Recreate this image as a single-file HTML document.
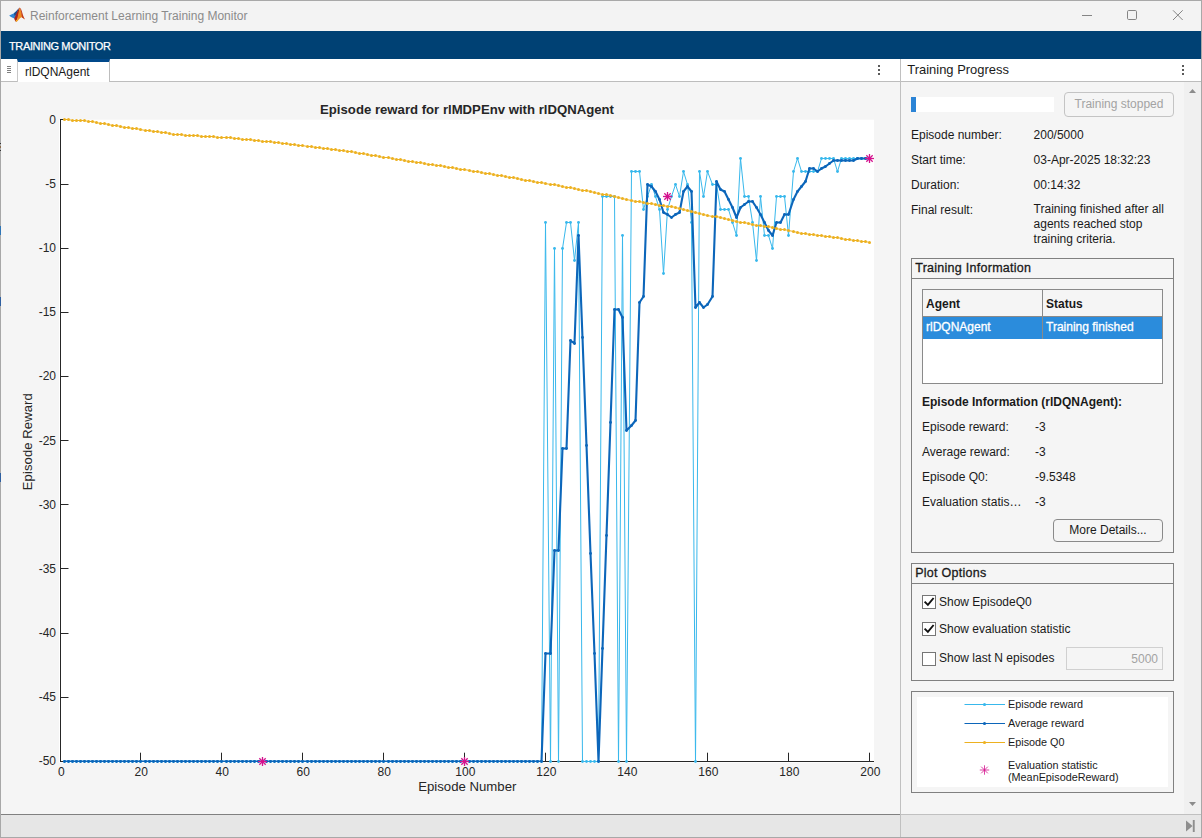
<!DOCTYPE html>
<html><head><meta charset="utf-8"><title>Reinforcement Learning Training Monitor</title>
<style>
*{box-sizing:border-box;margin:0;padding:0}
html,body{width:1202px;height:838px;overflow:hidden}
body{position:relative;background:#f5f5f5;font-family:"Liberation Sans",Arial,sans-serif;font-size:12px;color:#1a1a1a}
.abs{position:absolute}
#titlebar{left:0;top:0;width:1202px;height:31px;background:#f3f3f3}
#title{left:30px;top:9px;font-size:12px;color:#8b8b8b;white-space:nowrap}
#band{left:0;top:31px;width:1202px;height:28px;background:#004174}
#bandtxt{left:9px;top:40px;color:#fff;font-size:11px;letter-spacing:-0.36px;-webkit-text-stroke:0.25px #fff;white-space:nowrap}
#tabbar{left:0;top:59px;width:1202px;height:23px;background:#fff;border-bottom:1px solid #bdbdbd}
#tab{left:17px;top:59px;width:93px;height:23px;background:#fff;border-top:3px solid #00488a;border-right:1px solid #bdbdbd;border-left:1px solid #c8c8c8}
#tabtxt{left:25px;top:65px;font-size:12px;color:#1a1a1a;white-space:nowrap}
#divider{left:900px;top:59px;width:1px;height:779px;background:#c0c0c0}
#status{left:0;top:814px;width:1202px;height:24px;background:#e6e6e6;border-top:1px solid #c0c0c0}
#scroll{left:1184px;top:82px;width:17px;height:732px;background:#f0f0f0}
.lbl{white-space:nowrap;font-size:12px;color:#1a1a1a}
.panel{border:1px solid #808080}
.ptitle{border-bottom:1px solid #808080;font-size:12.5px;padding-left:3.2px;white-space:nowrap;letter-spacing:0.27px;-webkit-text-stroke:0.3px #1a1a1a}
.btn{border:1px solid #c4c4c4;border-radius:4px;text-align:center;white-space:nowrap}
.cb{width:14px;height:14px;border:1px solid #767676;background:#fff}
.win{pointer-events:none}
</style></head>
<body>
<div id="titlebar" class="abs"></div>
<svg class="abs" style="left:0;top:0" width="30" height="30" viewBox="0 0 30 30">
 <path d="M9.2 15.6 L14 13.3 C16 11.8 17.5 10 18.8 8 L16 16 L14.6 18.6 C12.5 18 10.5 16.8 9.2 15.6 Z" fill="#2e86d4"/>
 <path d="M14 13.3 C16 11.8 17.5 10 18.8 8 L16.5 14.5 L14.4 15.8 Z" fill="#1f4e8c"/>
 <path d="M14.2 18.4 C16 15 18 10 19.3 7.8 L19.9 7.8 L18.5 16 L16.3 22 C15.5 21.5 14.7 20 14.2 18.4 Z" fill="#a8231b"/>
 <path d="M16.3 22 C17.5 18 18.7 12 19.6 7.8 C20.6 8.5 21 11 21.6 13 C22.5 16 23.8 18.2 24.9 19.4 C23.5 18.5 22.3 17.4 21.3 17.2 C19.5 18 18 21 16.3 22 Z" fill="#ee8a22"/>
 <path d="M19.9 7.8 C21 8.2 21.6 10.5 22.3 12.8 C23 15.5 24 17.8 24.9 19.4 C23.8 18.6 22.8 17.8 22 17.4 C21.5 14 20.8 10 19.9 7.8 Z" fill="#c03a1e"/>
 <path d="M15.6 20.6 C16.6 20 17.6 19 18.4 18 C17.8 19.6 17.2 21 16.3 22 Z" fill="#f8b71f"/>
</svg>
<div id="title" class="abs">Reinforcement Learning Training Monitor</div>
<svg class="abs" style="left:1070px;top:0" width="132" height="31" viewBox="0 0 132 31" fill="none" stroke="#858585" stroke-width="1">
 <line x1="12" y1="15.5" x2="22" y2="15.5"/>
 <rect x="57.5" y="10.5" width="9" height="9" rx="1.2"/>
 <path d="M103 10.3 L112.7 20 M112.7 10.3 L103 20"/>
</svg>
<div id="band" class="abs"></div>
<div id="bandtxt" class="abs">TRAINING MONITOR</div>
<div id="tabbar" class="abs"></div>
<div id="tab" class="abs"></div>
<div id="tabtxt" class="abs">rlDQNAgent</div>
<svg class="abs" style="left:5px;top:64px" width="8" height="10" viewBox="0 0 8 10" stroke="#808080" stroke-width="1"><path d="M2 2.5H6M2 4.5H6M2 6.5H6M2 8.5H6"/></svg>
<svg class="abs" style="left:876px;top:63px" width="6" height="14" viewBox="0 0 6 14" fill="#5a5a5a"><rect x="2" y="2" width="2" height="2"/><rect x="2" y="6" width="2" height="2"/><rect x="2" y="10" width="2" height="2"/></svg>
<svg class="abs" style="left:1180px;top:63px" width="6" height="14" viewBox="0 0 6 14" fill="#5a5a5a"><rect x="2" y="2" width="2" height="2"/><rect x="2" y="6" width="2" height="2"/><rect x="2" y="10" width="2" height="2"/></svg>
<div class="abs" style="left:907.3px;top:62.3px;font-size:12.95px;white-space:nowrap;color:#1a1a1a">Training Progress</div>
<div id="divider" class="abs"></div>

<svg class="chart" width="900" height="733" viewBox="0 81 900 733" style="position:absolute;left:0;top:81px" font-family="Liberation Sans, Arial, sans-serif">
<rect x="59" y="119.7" width="815" height="643" fill="#fff"/>
<g stroke="#262626" stroke-width="1" fill="none">
<line x1="60.5" y1="119" x2="60.5" y2="762"/>
<line x1="60" y1="761.5" x2="874" y2="761.5"/>
<line x1="60.5" y1="761.5" x2="60.5" y2="752.7"/>
<line x1="140.5" y1="761.5" x2="140.5" y2="752.7"/>
<line x1="221.5" y1="761.5" x2="221.5" y2="752.7"/>
<line x1="302.5" y1="761.5" x2="302.5" y2="752.7"/>
<line x1="383.5" y1="761.5" x2="383.5" y2="752.7"/>
<line x1="464.5" y1="761.5" x2="464.5" y2="752.7"/>
<line x1="545.5" y1="761.5" x2="545.5" y2="752.7"/>
<line x1="626.5" y1="761.5" x2="626.5" y2="752.7"/>
<line x1="707.5" y1="761.5" x2="707.5" y2="752.7"/>
<line x1="788.5" y1="761.5" x2="788.5" y2="752.7"/>
<line x1="869.5" y1="761.5" x2="869.5" y2="752.7"/>
<line x1="60.5" y1="119.5" x2="68.5" y2="119.5"/>
<line x1="60.5" y1="184.5" x2="68.5" y2="184.5"/>
<line x1="60.5" y1="248.5" x2="68.5" y2="248.5"/>
<line x1="60.5" y1="312.5" x2="68.5" y2="312.5"/>
<line x1="60.5" y1="376.5" x2="68.5" y2="376.5"/>
<line x1="60.5" y1="440.5" x2="68.5" y2="440.5"/>
<line x1="60.5" y1="504.5" x2="68.5" y2="504.5"/>
<line x1="60.5" y1="568.5" x2="68.5" y2="568.5"/>
<line x1="60.5" y1="633.5" x2="68.5" y2="633.5"/>
<line x1="60.5" y1="697.5" x2="68.5" y2="697.5"/>
<line x1="60.5" y1="761.5" x2="68.5" y2="761.5"/>
</g>
<clipPath id="cb"><rect x="60" y="119" width="814" height="643"/></clipPath>
<g fill="none" stroke-linejoin="round">
<polyline clip-path="url(#cb)" points="64.50,761.50 68.50,761.50 72.50,761.50 76.50,761.50 80.50,761.50 84.50,761.50 88.50,761.50 92.50,761.50 96.50,761.50 100.50,761.50 104.50,761.50 108.50,761.50 112.50,761.50 116.50,761.50 120.50,761.50 124.50,761.50 128.50,761.50 132.50,761.50 136.50,761.50 140.50,761.50 145.50,761.50 149.50,761.50 153.50,761.50 157.50,761.50 161.50,761.50 165.50,761.50 169.50,761.50 173.50,761.50 177.50,761.50 181.50,761.50 185.50,761.50 189.50,761.50 193.50,761.50 197.50,761.50 201.50,761.50 205.50,761.50 209.50,761.50 213.50,761.50 217.50,761.50 221.50,761.50 226.50,761.50 230.50,761.50 234.50,761.50 238.50,761.50 242.50,761.50 246.50,761.50 250.50,761.50 254.50,761.50 258.50,761.50 262.50,761.50 266.50,761.50 270.50,761.50 274.50,761.50 278.50,761.50 282.50,761.50 286.50,761.50 290.50,761.50 294.50,761.50 298.50,761.50 302.50,761.50 307.50,761.50 311.50,761.50 315.50,761.50 319.50,761.50 323.50,761.50 327.50,761.50 331.50,761.50 335.50,761.50 339.50,761.50 343.50,761.50 347.50,761.50 351.50,761.50 355.50,761.50 359.50,761.50 363.50,761.50 367.50,761.50 371.50,761.50 375.50,761.50 379.50,761.50 383.50,761.50 388.50,761.50 392.50,761.50 396.50,761.50 400.50,761.50 404.50,761.50 408.50,761.50 412.50,761.50 416.50,761.50 420.50,761.50 424.50,761.50 428.50,761.50 432.50,761.50 436.50,761.50 440.50,761.50 444.50,761.50 448.50,761.50 452.50,761.50 456.50,761.50 460.50,761.50 464.50,761.50 469.50,761.50 473.50,761.50 477.50,761.50 481.50,761.50 485.50,761.50 489.50,761.50 493.50,761.50 497.50,761.50 501.50,761.50 505.50,761.50 509.50,761.50 513.50,761.50 517.50,761.50 521.50,761.50 525.50,761.50 529.50,761.50 533.50,761.50 537.50,761.50 541.50,761.50 545.50,222.50 550.50,761.50 554.50,248.50 558.50,761.50 562.50,248.50 566.50,222.50 570.50,222.50 574.50,260.50 578.50,222.50 582.50,761.50 586.50,761.50 590.50,761.50 594.50,761.50 598.50,761.50 602.50,196.50 606.50,196.50 610.50,196.50 614.50,196.50 618.50,761.50 622.50,235.50 626.50,761.50 631.50,171.50 635.50,171.50 639.50,171.50 643.50,209.50 647.50,196.50 651.50,184.50 655.50,196.50 659.50,209.50 663.50,273.50 667.50,209.50 671.50,196.50 675.50,184.50 679.50,196.50 683.50,171.50 687.50,184.50 691.50,222.50 695.50,761.50 699.50,171.50 703.50,196.50 707.50,171.50 712.50,184.50 716.50,184.50 720.50,209.50 724.50,209.50 728.50,209.50 732.50,222.50 736.50,235.50 740.50,158.50 744.50,196.50 748.50,196.50 752.50,222.50 756.50,260.50 760.50,196.50 764.50,235.50 768.50,235.50 772.50,248.50 776.50,196.50 780.50,196.50 784.50,196.50 788.50,235.50 793.50,171.50 797.50,158.50 801.50,171.50 805.50,171.50 809.50,171.50 813.50,171.50 817.50,171.50 821.50,158.50 825.50,158.50 829.50,158.50 833.50,158.50 837.50,171.50 841.50,158.50 845.50,158.50 849.50,158.50 853.50,158.50 857.50,158.50 861.50,158.50 865.50,158.50 869.50,158.50" stroke="#38B8EC" stroke-width="1"/>
<circle cx="64.50" cy="761.50" r="1.45" fill="#38B8EC"/><circle cx="68.50" cy="761.50" r="1.45" fill="#38B8EC"/><circle cx="72.50" cy="761.50" r="1.45" fill="#38B8EC"/><circle cx="76.50" cy="761.50" r="1.45" fill="#38B8EC"/><circle cx="80.50" cy="761.50" r="1.45" fill="#38B8EC"/><circle cx="84.50" cy="761.50" r="1.45" fill="#38B8EC"/><circle cx="88.50" cy="761.50" r="1.45" fill="#38B8EC"/><circle cx="92.50" cy="761.50" r="1.45" fill="#38B8EC"/><circle cx="96.50" cy="761.50" r="1.45" fill="#38B8EC"/><circle cx="100.50" cy="761.50" r="1.45" fill="#38B8EC"/><circle cx="104.50" cy="761.50" r="1.45" fill="#38B8EC"/><circle cx="108.50" cy="761.50" r="1.45" fill="#38B8EC"/><circle cx="112.50" cy="761.50" r="1.45" fill="#38B8EC"/><circle cx="116.50" cy="761.50" r="1.45" fill="#38B8EC"/><circle cx="120.50" cy="761.50" r="1.45" fill="#38B8EC"/><circle cx="124.50" cy="761.50" r="1.45" fill="#38B8EC"/><circle cx="128.50" cy="761.50" r="1.45" fill="#38B8EC"/><circle cx="132.50" cy="761.50" r="1.45" fill="#38B8EC"/><circle cx="136.50" cy="761.50" r="1.45" fill="#38B8EC"/><circle cx="140.50" cy="761.50" r="1.45" fill="#38B8EC"/><circle cx="145.50" cy="761.50" r="1.45" fill="#38B8EC"/><circle cx="149.50" cy="761.50" r="1.45" fill="#38B8EC"/><circle cx="153.50" cy="761.50" r="1.45" fill="#38B8EC"/><circle cx="157.50" cy="761.50" r="1.45" fill="#38B8EC"/><circle cx="161.50" cy="761.50" r="1.45" fill="#38B8EC"/><circle cx="165.50" cy="761.50" r="1.45" fill="#38B8EC"/><circle cx="169.50" cy="761.50" r="1.45" fill="#38B8EC"/><circle cx="173.50" cy="761.50" r="1.45" fill="#38B8EC"/><circle cx="177.50" cy="761.50" r="1.45" fill="#38B8EC"/><circle cx="181.50" cy="761.50" r="1.45" fill="#38B8EC"/><circle cx="185.50" cy="761.50" r="1.45" fill="#38B8EC"/><circle cx="189.50" cy="761.50" r="1.45" fill="#38B8EC"/><circle cx="193.50" cy="761.50" r="1.45" fill="#38B8EC"/><circle cx="197.50" cy="761.50" r="1.45" fill="#38B8EC"/><circle cx="201.50" cy="761.50" r="1.45" fill="#38B8EC"/><circle cx="205.50" cy="761.50" r="1.45" fill="#38B8EC"/><circle cx="209.50" cy="761.50" r="1.45" fill="#38B8EC"/><circle cx="213.50" cy="761.50" r="1.45" fill="#38B8EC"/><circle cx="217.50" cy="761.50" r="1.45" fill="#38B8EC"/><circle cx="221.50" cy="761.50" r="1.45" fill="#38B8EC"/><circle cx="226.50" cy="761.50" r="1.45" fill="#38B8EC"/><circle cx="230.50" cy="761.50" r="1.45" fill="#38B8EC"/><circle cx="234.50" cy="761.50" r="1.45" fill="#38B8EC"/><circle cx="238.50" cy="761.50" r="1.45" fill="#38B8EC"/><circle cx="242.50" cy="761.50" r="1.45" fill="#38B8EC"/><circle cx="246.50" cy="761.50" r="1.45" fill="#38B8EC"/><circle cx="250.50" cy="761.50" r="1.45" fill="#38B8EC"/><circle cx="254.50" cy="761.50" r="1.45" fill="#38B8EC"/><circle cx="258.50" cy="761.50" r="1.45" fill="#38B8EC"/><circle cx="262.50" cy="761.50" r="1.45" fill="#38B8EC"/><circle cx="266.50" cy="761.50" r="1.45" fill="#38B8EC"/><circle cx="270.50" cy="761.50" r="1.45" fill="#38B8EC"/><circle cx="274.50" cy="761.50" r="1.45" fill="#38B8EC"/><circle cx="278.50" cy="761.50" r="1.45" fill="#38B8EC"/><circle cx="282.50" cy="761.50" r="1.45" fill="#38B8EC"/><circle cx="286.50" cy="761.50" r="1.45" fill="#38B8EC"/><circle cx="290.50" cy="761.50" r="1.45" fill="#38B8EC"/><circle cx="294.50" cy="761.50" r="1.45" fill="#38B8EC"/><circle cx="298.50" cy="761.50" r="1.45" fill="#38B8EC"/><circle cx="302.50" cy="761.50" r="1.45" fill="#38B8EC"/><circle cx="307.50" cy="761.50" r="1.45" fill="#38B8EC"/><circle cx="311.50" cy="761.50" r="1.45" fill="#38B8EC"/><circle cx="315.50" cy="761.50" r="1.45" fill="#38B8EC"/><circle cx="319.50" cy="761.50" r="1.45" fill="#38B8EC"/><circle cx="323.50" cy="761.50" r="1.45" fill="#38B8EC"/><circle cx="327.50" cy="761.50" r="1.45" fill="#38B8EC"/><circle cx="331.50" cy="761.50" r="1.45" fill="#38B8EC"/><circle cx="335.50" cy="761.50" r="1.45" fill="#38B8EC"/><circle cx="339.50" cy="761.50" r="1.45" fill="#38B8EC"/><circle cx="343.50" cy="761.50" r="1.45" fill="#38B8EC"/><circle cx="347.50" cy="761.50" r="1.45" fill="#38B8EC"/><circle cx="351.50" cy="761.50" r="1.45" fill="#38B8EC"/><circle cx="355.50" cy="761.50" r="1.45" fill="#38B8EC"/><circle cx="359.50" cy="761.50" r="1.45" fill="#38B8EC"/><circle cx="363.50" cy="761.50" r="1.45" fill="#38B8EC"/><circle cx="367.50" cy="761.50" r="1.45" fill="#38B8EC"/><circle cx="371.50" cy="761.50" r="1.45" fill="#38B8EC"/><circle cx="375.50" cy="761.50" r="1.45" fill="#38B8EC"/><circle cx="379.50" cy="761.50" r="1.45" fill="#38B8EC"/><circle cx="383.50" cy="761.50" r="1.45" fill="#38B8EC"/><circle cx="388.50" cy="761.50" r="1.45" fill="#38B8EC"/><circle cx="392.50" cy="761.50" r="1.45" fill="#38B8EC"/><circle cx="396.50" cy="761.50" r="1.45" fill="#38B8EC"/><circle cx="400.50" cy="761.50" r="1.45" fill="#38B8EC"/><circle cx="404.50" cy="761.50" r="1.45" fill="#38B8EC"/><circle cx="408.50" cy="761.50" r="1.45" fill="#38B8EC"/><circle cx="412.50" cy="761.50" r="1.45" fill="#38B8EC"/><circle cx="416.50" cy="761.50" r="1.45" fill="#38B8EC"/><circle cx="420.50" cy="761.50" r="1.45" fill="#38B8EC"/><circle cx="424.50" cy="761.50" r="1.45" fill="#38B8EC"/><circle cx="428.50" cy="761.50" r="1.45" fill="#38B8EC"/><circle cx="432.50" cy="761.50" r="1.45" fill="#38B8EC"/><circle cx="436.50" cy="761.50" r="1.45" fill="#38B8EC"/><circle cx="440.50" cy="761.50" r="1.45" fill="#38B8EC"/><circle cx="444.50" cy="761.50" r="1.45" fill="#38B8EC"/><circle cx="448.50" cy="761.50" r="1.45" fill="#38B8EC"/><circle cx="452.50" cy="761.50" r="1.45" fill="#38B8EC"/><circle cx="456.50" cy="761.50" r="1.45" fill="#38B8EC"/><circle cx="460.50" cy="761.50" r="1.45" fill="#38B8EC"/><circle cx="464.50" cy="761.50" r="1.45" fill="#38B8EC"/><circle cx="469.50" cy="761.50" r="1.45" fill="#38B8EC"/><circle cx="473.50" cy="761.50" r="1.45" fill="#38B8EC"/><circle cx="477.50" cy="761.50" r="1.45" fill="#38B8EC"/><circle cx="481.50" cy="761.50" r="1.45" fill="#38B8EC"/><circle cx="485.50" cy="761.50" r="1.45" fill="#38B8EC"/><circle cx="489.50" cy="761.50" r="1.45" fill="#38B8EC"/><circle cx="493.50" cy="761.50" r="1.45" fill="#38B8EC"/><circle cx="497.50" cy="761.50" r="1.45" fill="#38B8EC"/><circle cx="501.50" cy="761.50" r="1.45" fill="#38B8EC"/><circle cx="505.50" cy="761.50" r="1.45" fill="#38B8EC"/><circle cx="509.50" cy="761.50" r="1.45" fill="#38B8EC"/><circle cx="513.50" cy="761.50" r="1.45" fill="#38B8EC"/><circle cx="517.50" cy="761.50" r="1.45" fill="#38B8EC"/><circle cx="521.50" cy="761.50" r="1.45" fill="#38B8EC"/><circle cx="525.50" cy="761.50" r="1.45" fill="#38B8EC"/><circle cx="529.50" cy="761.50" r="1.45" fill="#38B8EC"/><circle cx="533.50" cy="761.50" r="1.45" fill="#38B8EC"/><circle cx="537.50" cy="761.50" r="1.45" fill="#38B8EC"/><circle cx="541.50" cy="761.50" r="1.45" fill="#38B8EC"/><circle cx="545.50" cy="222.50" r="1.45" fill="#38B8EC"/><circle cx="550.50" cy="761.50" r="1.45" fill="#38B8EC"/><circle cx="554.50" cy="248.50" r="1.45" fill="#38B8EC"/><circle cx="558.50" cy="761.50" r="1.45" fill="#38B8EC"/><circle cx="562.50" cy="248.50" r="1.45" fill="#38B8EC"/><circle cx="566.50" cy="222.50" r="1.45" fill="#38B8EC"/><circle cx="570.50" cy="222.50" r="1.45" fill="#38B8EC"/><circle cx="574.50" cy="260.50" r="1.45" fill="#38B8EC"/><circle cx="578.50" cy="222.50" r="1.45" fill="#38B8EC"/><circle cx="582.50" cy="761.50" r="1.45" fill="#38B8EC"/><circle cx="586.50" cy="761.50" r="1.45" fill="#38B8EC"/><circle cx="590.50" cy="761.50" r="1.45" fill="#38B8EC"/><circle cx="594.50" cy="761.50" r="1.45" fill="#38B8EC"/><circle cx="598.50" cy="761.50" r="1.45" fill="#38B8EC"/><circle cx="602.50" cy="196.50" r="1.45" fill="#38B8EC"/><circle cx="606.50" cy="196.50" r="1.45" fill="#38B8EC"/><circle cx="610.50" cy="196.50" r="1.45" fill="#38B8EC"/><circle cx="614.50" cy="196.50" r="1.45" fill="#38B8EC"/><circle cx="618.50" cy="761.50" r="1.45" fill="#38B8EC"/><circle cx="622.50" cy="235.50" r="1.45" fill="#38B8EC"/><circle cx="626.50" cy="761.50" r="1.45" fill="#38B8EC"/><circle cx="631.50" cy="171.50" r="1.45" fill="#38B8EC"/><circle cx="635.50" cy="171.50" r="1.45" fill="#38B8EC"/><circle cx="639.50" cy="171.50" r="1.45" fill="#38B8EC"/><circle cx="643.50" cy="209.50" r="1.45" fill="#38B8EC"/><circle cx="647.50" cy="196.50" r="1.45" fill="#38B8EC"/><circle cx="651.50" cy="184.50" r="1.45" fill="#38B8EC"/><circle cx="655.50" cy="196.50" r="1.45" fill="#38B8EC"/><circle cx="659.50" cy="209.50" r="1.45" fill="#38B8EC"/><circle cx="663.50" cy="273.50" r="1.45" fill="#38B8EC"/><circle cx="667.50" cy="209.50" r="1.45" fill="#38B8EC"/><circle cx="671.50" cy="196.50" r="1.45" fill="#38B8EC"/><circle cx="675.50" cy="184.50" r="1.45" fill="#38B8EC"/><circle cx="679.50" cy="196.50" r="1.45" fill="#38B8EC"/><circle cx="683.50" cy="171.50" r="1.45" fill="#38B8EC"/><circle cx="687.50" cy="184.50" r="1.45" fill="#38B8EC"/><circle cx="691.50" cy="222.50" r="1.45" fill="#38B8EC"/><circle cx="695.50" cy="761.50" r="1.45" fill="#38B8EC"/><circle cx="699.50" cy="171.50" r="1.45" fill="#38B8EC"/><circle cx="703.50" cy="196.50" r="1.45" fill="#38B8EC"/><circle cx="707.50" cy="171.50" r="1.45" fill="#38B8EC"/><circle cx="712.50" cy="184.50" r="1.45" fill="#38B8EC"/><circle cx="716.50" cy="184.50" r="1.45" fill="#38B8EC"/><circle cx="720.50" cy="209.50" r="1.45" fill="#38B8EC"/><circle cx="724.50" cy="209.50" r="1.45" fill="#38B8EC"/><circle cx="728.50" cy="209.50" r="1.45" fill="#38B8EC"/><circle cx="732.50" cy="222.50" r="1.45" fill="#38B8EC"/><circle cx="736.50" cy="235.50" r="1.45" fill="#38B8EC"/><circle cx="740.50" cy="158.50" r="1.45" fill="#38B8EC"/><circle cx="744.50" cy="196.50" r="1.45" fill="#38B8EC"/><circle cx="748.50" cy="196.50" r="1.45" fill="#38B8EC"/><circle cx="752.50" cy="222.50" r="1.45" fill="#38B8EC"/><circle cx="756.50" cy="260.50" r="1.45" fill="#38B8EC"/><circle cx="760.50" cy="196.50" r="1.45" fill="#38B8EC"/><circle cx="764.50" cy="235.50" r="1.45" fill="#38B8EC"/><circle cx="768.50" cy="235.50" r="1.45" fill="#38B8EC"/><circle cx="772.50" cy="248.50" r="1.45" fill="#38B8EC"/><circle cx="776.50" cy="196.50" r="1.45" fill="#38B8EC"/><circle cx="780.50" cy="196.50" r="1.45" fill="#38B8EC"/><circle cx="784.50" cy="196.50" r="1.45" fill="#38B8EC"/><circle cx="788.50" cy="235.50" r="1.45" fill="#38B8EC"/><circle cx="793.50" cy="171.50" r="1.45" fill="#38B8EC"/><circle cx="797.50" cy="158.50" r="1.45" fill="#38B8EC"/><circle cx="801.50" cy="171.50" r="1.45" fill="#38B8EC"/><circle cx="805.50" cy="171.50" r="1.45" fill="#38B8EC"/><circle cx="809.50" cy="171.50" r="1.45" fill="#38B8EC"/><circle cx="813.50" cy="171.50" r="1.45" fill="#38B8EC"/><circle cx="817.50" cy="171.50" r="1.45" fill="#38B8EC"/><circle cx="821.50" cy="158.50" r="1.45" fill="#38B8EC"/><circle cx="825.50" cy="158.50" r="1.45" fill="#38B8EC"/><circle cx="829.50" cy="158.50" r="1.45" fill="#38B8EC"/><circle cx="833.50" cy="158.50" r="1.45" fill="#38B8EC"/><circle cx="837.50" cy="171.50" r="1.45" fill="#38B8EC"/><circle cx="841.50" cy="158.50" r="1.45" fill="#38B8EC"/><circle cx="845.50" cy="158.50" r="1.45" fill="#38B8EC"/><circle cx="849.50" cy="158.50" r="1.45" fill="#38B8EC"/><circle cx="853.50" cy="158.50" r="1.45" fill="#38B8EC"/><circle cx="857.50" cy="158.50" r="1.45" fill="#38B8EC"/><circle cx="861.50" cy="158.50" r="1.45" fill="#38B8EC"/><circle cx="865.50" cy="158.50" r="1.45" fill="#38B8EC"/><circle cx="869.50" cy="158.50" r="1.45" fill="#38B8EC"/>
<polyline clip-path="url(#cb)" points="64.50,761.50 68.50,761.50 72.50,761.50 76.50,761.50 80.50,761.50 84.50,761.50 88.50,761.50 92.50,761.50 96.50,761.50 100.50,761.50 104.50,761.50 108.50,761.50 112.50,761.50 116.50,761.50 120.50,761.50 124.50,761.50 128.50,761.50 132.50,761.50 136.50,761.50 140.50,761.50 145.50,761.50 149.50,761.50 153.50,761.50 157.50,761.50 161.50,761.50 165.50,761.50 169.50,761.50 173.50,761.50 177.50,761.50 181.50,761.50 185.50,761.50 189.50,761.50 193.50,761.50 197.50,761.50 201.50,761.50 205.50,761.50 209.50,761.50 213.50,761.50 217.50,761.50 221.50,761.50 226.50,761.50 230.50,761.50 234.50,761.50 238.50,761.50 242.50,761.50 246.50,761.50 250.50,761.50 254.50,761.50 258.50,761.50 262.50,761.50 266.50,761.50 270.50,761.50 274.50,761.50 278.50,761.50 282.50,761.50 286.50,761.50 290.50,761.50 294.50,761.50 298.50,761.50 302.50,761.50 307.50,761.50 311.50,761.50 315.50,761.50 319.50,761.50 323.50,761.50 327.50,761.50 331.50,761.50 335.50,761.50 339.50,761.50 343.50,761.50 347.50,761.50 351.50,761.50 355.50,761.50 359.50,761.50 363.50,761.50 367.50,761.50 371.50,761.50 375.50,761.50 379.50,761.50 383.50,761.50 388.50,761.50 392.50,761.50 396.50,761.50 400.50,761.50 404.50,761.50 408.50,761.50 412.50,761.50 416.50,761.50 420.50,761.50 424.50,761.50 428.50,761.50 432.50,761.50 436.50,761.50 440.50,761.50 444.50,761.50 448.50,761.50 452.50,761.50 456.50,761.50 460.50,761.50 464.50,761.50 469.50,761.50 473.50,761.50 477.50,761.50 481.50,761.50 485.50,761.50 489.50,761.50 493.50,761.50 497.50,761.50 501.50,761.50 505.50,761.50 509.50,761.50 513.50,761.50 517.50,761.50 521.50,761.50 525.50,761.50 529.50,761.50 533.50,761.50 537.50,761.50 541.50,761.50 545.50,653.50 550.50,653.50 554.50,550.50 558.50,550.50 562.50,448.50 566.50,448.50 570.50,340.50 574.50,343.50 578.50,235.50 582.50,337.50 586.50,445.50 590.50,553.50 594.50,653.50 598.50,761.50 602.50,648.50 606.50,535.50 610.50,422.50 614.50,309.50 618.50,309.50 622.50,317.50 626.50,430.50 631.50,425.50 635.50,420.50 639.50,302.50 643.50,296.50 647.50,184.50 651.50,186.50 655.50,191.50 659.50,199.50 663.50,212.50 667.50,214.50 671.50,217.50 675.50,214.50 679.50,212.50 683.50,191.50 687.50,186.50 691.50,191.50 695.50,307.50 699.50,302.50 703.50,307.50 707.50,304.50 712.50,296.50 716.50,181.50 720.50,189.50 724.50,191.50 728.50,199.50 732.50,207.50 736.50,217.50 740.50,207.50 744.50,204.50 748.50,201.50 752.50,201.50 756.50,207.50 760.50,214.50 764.50,222.50 768.50,230.50 772.50,235.50 776.50,222.50 780.50,222.50 784.50,214.50 788.50,214.50 793.50,199.50 797.50,191.50 801.50,186.50 805.50,181.50 809.50,168.50 813.50,168.50 817.50,171.50 821.50,168.50 825.50,166.50 829.50,163.50 833.50,160.50 837.50,160.50 841.50,160.50 845.50,160.50 849.50,160.50 853.50,160.50 857.50,158.50 861.50,158.50 865.50,158.50 869.50,158.50" stroke="#0C66BA" stroke-width="2.1"/>
<circle cx="64.50" cy="761.50" r="1.45" fill="#0C66BA"/><circle cx="68.50" cy="761.50" r="1.45" fill="#0C66BA"/><circle cx="72.50" cy="761.50" r="1.45" fill="#0C66BA"/><circle cx="76.50" cy="761.50" r="1.45" fill="#0C66BA"/><circle cx="80.50" cy="761.50" r="1.45" fill="#0C66BA"/><circle cx="84.50" cy="761.50" r="1.45" fill="#0C66BA"/><circle cx="88.50" cy="761.50" r="1.45" fill="#0C66BA"/><circle cx="92.50" cy="761.50" r="1.45" fill="#0C66BA"/><circle cx="96.50" cy="761.50" r="1.45" fill="#0C66BA"/><circle cx="100.50" cy="761.50" r="1.45" fill="#0C66BA"/><circle cx="104.50" cy="761.50" r="1.45" fill="#0C66BA"/><circle cx="108.50" cy="761.50" r="1.45" fill="#0C66BA"/><circle cx="112.50" cy="761.50" r="1.45" fill="#0C66BA"/><circle cx="116.50" cy="761.50" r="1.45" fill="#0C66BA"/><circle cx="120.50" cy="761.50" r="1.45" fill="#0C66BA"/><circle cx="124.50" cy="761.50" r="1.45" fill="#0C66BA"/><circle cx="128.50" cy="761.50" r="1.45" fill="#0C66BA"/><circle cx="132.50" cy="761.50" r="1.45" fill="#0C66BA"/><circle cx="136.50" cy="761.50" r="1.45" fill="#0C66BA"/><circle cx="140.50" cy="761.50" r="1.45" fill="#0C66BA"/><circle cx="145.50" cy="761.50" r="1.45" fill="#0C66BA"/><circle cx="149.50" cy="761.50" r="1.45" fill="#0C66BA"/><circle cx="153.50" cy="761.50" r="1.45" fill="#0C66BA"/><circle cx="157.50" cy="761.50" r="1.45" fill="#0C66BA"/><circle cx="161.50" cy="761.50" r="1.45" fill="#0C66BA"/><circle cx="165.50" cy="761.50" r="1.45" fill="#0C66BA"/><circle cx="169.50" cy="761.50" r="1.45" fill="#0C66BA"/><circle cx="173.50" cy="761.50" r="1.45" fill="#0C66BA"/><circle cx="177.50" cy="761.50" r="1.45" fill="#0C66BA"/><circle cx="181.50" cy="761.50" r="1.45" fill="#0C66BA"/><circle cx="185.50" cy="761.50" r="1.45" fill="#0C66BA"/><circle cx="189.50" cy="761.50" r="1.45" fill="#0C66BA"/><circle cx="193.50" cy="761.50" r="1.45" fill="#0C66BA"/><circle cx="197.50" cy="761.50" r="1.45" fill="#0C66BA"/><circle cx="201.50" cy="761.50" r="1.45" fill="#0C66BA"/><circle cx="205.50" cy="761.50" r="1.45" fill="#0C66BA"/><circle cx="209.50" cy="761.50" r="1.45" fill="#0C66BA"/><circle cx="213.50" cy="761.50" r="1.45" fill="#0C66BA"/><circle cx="217.50" cy="761.50" r="1.45" fill="#0C66BA"/><circle cx="221.50" cy="761.50" r="1.45" fill="#0C66BA"/><circle cx="226.50" cy="761.50" r="1.45" fill="#0C66BA"/><circle cx="230.50" cy="761.50" r="1.45" fill="#0C66BA"/><circle cx="234.50" cy="761.50" r="1.45" fill="#0C66BA"/><circle cx="238.50" cy="761.50" r="1.45" fill="#0C66BA"/><circle cx="242.50" cy="761.50" r="1.45" fill="#0C66BA"/><circle cx="246.50" cy="761.50" r="1.45" fill="#0C66BA"/><circle cx="250.50" cy="761.50" r="1.45" fill="#0C66BA"/><circle cx="254.50" cy="761.50" r="1.45" fill="#0C66BA"/><circle cx="258.50" cy="761.50" r="1.45" fill="#0C66BA"/><circle cx="262.50" cy="761.50" r="1.45" fill="#0C66BA"/><circle cx="266.50" cy="761.50" r="1.45" fill="#0C66BA"/><circle cx="270.50" cy="761.50" r="1.45" fill="#0C66BA"/><circle cx="274.50" cy="761.50" r="1.45" fill="#0C66BA"/><circle cx="278.50" cy="761.50" r="1.45" fill="#0C66BA"/><circle cx="282.50" cy="761.50" r="1.45" fill="#0C66BA"/><circle cx="286.50" cy="761.50" r="1.45" fill="#0C66BA"/><circle cx="290.50" cy="761.50" r="1.45" fill="#0C66BA"/><circle cx="294.50" cy="761.50" r="1.45" fill="#0C66BA"/><circle cx="298.50" cy="761.50" r="1.45" fill="#0C66BA"/><circle cx="302.50" cy="761.50" r="1.45" fill="#0C66BA"/><circle cx="307.50" cy="761.50" r="1.45" fill="#0C66BA"/><circle cx="311.50" cy="761.50" r="1.45" fill="#0C66BA"/><circle cx="315.50" cy="761.50" r="1.45" fill="#0C66BA"/><circle cx="319.50" cy="761.50" r="1.45" fill="#0C66BA"/><circle cx="323.50" cy="761.50" r="1.45" fill="#0C66BA"/><circle cx="327.50" cy="761.50" r="1.45" fill="#0C66BA"/><circle cx="331.50" cy="761.50" r="1.45" fill="#0C66BA"/><circle cx="335.50" cy="761.50" r="1.45" fill="#0C66BA"/><circle cx="339.50" cy="761.50" r="1.45" fill="#0C66BA"/><circle cx="343.50" cy="761.50" r="1.45" fill="#0C66BA"/><circle cx="347.50" cy="761.50" r="1.45" fill="#0C66BA"/><circle cx="351.50" cy="761.50" r="1.45" fill="#0C66BA"/><circle cx="355.50" cy="761.50" r="1.45" fill="#0C66BA"/><circle cx="359.50" cy="761.50" r="1.45" fill="#0C66BA"/><circle cx="363.50" cy="761.50" r="1.45" fill="#0C66BA"/><circle cx="367.50" cy="761.50" r="1.45" fill="#0C66BA"/><circle cx="371.50" cy="761.50" r="1.45" fill="#0C66BA"/><circle cx="375.50" cy="761.50" r="1.45" fill="#0C66BA"/><circle cx="379.50" cy="761.50" r="1.45" fill="#0C66BA"/><circle cx="383.50" cy="761.50" r="1.45" fill="#0C66BA"/><circle cx="388.50" cy="761.50" r="1.45" fill="#0C66BA"/><circle cx="392.50" cy="761.50" r="1.45" fill="#0C66BA"/><circle cx="396.50" cy="761.50" r="1.45" fill="#0C66BA"/><circle cx="400.50" cy="761.50" r="1.45" fill="#0C66BA"/><circle cx="404.50" cy="761.50" r="1.45" fill="#0C66BA"/><circle cx="408.50" cy="761.50" r="1.45" fill="#0C66BA"/><circle cx="412.50" cy="761.50" r="1.45" fill="#0C66BA"/><circle cx="416.50" cy="761.50" r="1.45" fill="#0C66BA"/><circle cx="420.50" cy="761.50" r="1.45" fill="#0C66BA"/><circle cx="424.50" cy="761.50" r="1.45" fill="#0C66BA"/><circle cx="428.50" cy="761.50" r="1.45" fill="#0C66BA"/><circle cx="432.50" cy="761.50" r="1.45" fill="#0C66BA"/><circle cx="436.50" cy="761.50" r="1.45" fill="#0C66BA"/><circle cx="440.50" cy="761.50" r="1.45" fill="#0C66BA"/><circle cx="444.50" cy="761.50" r="1.45" fill="#0C66BA"/><circle cx="448.50" cy="761.50" r="1.45" fill="#0C66BA"/><circle cx="452.50" cy="761.50" r="1.45" fill="#0C66BA"/><circle cx="456.50" cy="761.50" r="1.45" fill="#0C66BA"/><circle cx="460.50" cy="761.50" r="1.45" fill="#0C66BA"/><circle cx="464.50" cy="761.50" r="1.45" fill="#0C66BA"/><circle cx="469.50" cy="761.50" r="1.45" fill="#0C66BA"/><circle cx="473.50" cy="761.50" r="1.45" fill="#0C66BA"/><circle cx="477.50" cy="761.50" r="1.45" fill="#0C66BA"/><circle cx="481.50" cy="761.50" r="1.45" fill="#0C66BA"/><circle cx="485.50" cy="761.50" r="1.45" fill="#0C66BA"/><circle cx="489.50" cy="761.50" r="1.45" fill="#0C66BA"/><circle cx="493.50" cy="761.50" r="1.45" fill="#0C66BA"/><circle cx="497.50" cy="761.50" r="1.45" fill="#0C66BA"/><circle cx="501.50" cy="761.50" r="1.45" fill="#0C66BA"/><circle cx="505.50" cy="761.50" r="1.45" fill="#0C66BA"/><circle cx="509.50" cy="761.50" r="1.45" fill="#0C66BA"/><circle cx="513.50" cy="761.50" r="1.45" fill="#0C66BA"/><circle cx="517.50" cy="761.50" r="1.45" fill="#0C66BA"/><circle cx="521.50" cy="761.50" r="1.45" fill="#0C66BA"/><circle cx="525.50" cy="761.50" r="1.45" fill="#0C66BA"/><circle cx="529.50" cy="761.50" r="1.45" fill="#0C66BA"/><circle cx="533.50" cy="761.50" r="1.45" fill="#0C66BA"/><circle cx="537.50" cy="761.50" r="1.45" fill="#0C66BA"/><circle cx="541.50" cy="761.50" r="1.45" fill="#0C66BA"/><circle cx="545.50" cy="653.50" r="1.45" fill="#0C66BA"/><circle cx="550.50" cy="653.50" r="1.45" fill="#0C66BA"/><circle cx="554.50" cy="550.50" r="1.45" fill="#0C66BA"/><circle cx="558.50" cy="550.50" r="1.45" fill="#0C66BA"/><circle cx="562.50" cy="448.50" r="1.45" fill="#0C66BA"/><circle cx="566.50" cy="448.50" r="1.45" fill="#0C66BA"/><circle cx="570.50" cy="340.50" r="1.45" fill="#0C66BA"/><circle cx="574.50" cy="343.50" r="1.45" fill="#0C66BA"/><circle cx="578.50" cy="235.50" r="1.45" fill="#0C66BA"/><circle cx="582.50" cy="337.50" r="1.45" fill="#0C66BA"/><circle cx="586.50" cy="445.50" r="1.45" fill="#0C66BA"/><circle cx="590.50" cy="553.50" r="1.45" fill="#0C66BA"/><circle cx="594.50" cy="653.50" r="1.45" fill="#0C66BA"/><circle cx="598.50" cy="761.50" r="1.45" fill="#0C66BA"/><circle cx="602.50" cy="648.50" r="1.45" fill="#0C66BA"/><circle cx="606.50" cy="535.50" r="1.45" fill="#0C66BA"/><circle cx="610.50" cy="422.50" r="1.45" fill="#0C66BA"/><circle cx="614.50" cy="309.50" r="1.45" fill="#0C66BA"/><circle cx="618.50" cy="309.50" r="1.45" fill="#0C66BA"/><circle cx="622.50" cy="317.50" r="1.45" fill="#0C66BA"/><circle cx="626.50" cy="430.50" r="1.45" fill="#0C66BA"/><circle cx="631.50" cy="425.50" r="1.45" fill="#0C66BA"/><circle cx="635.50" cy="420.50" r="1.45" fill="#0C66BA"/><circle cx="639.50" cy="302.50" r="1.45" fill="#0C66BA"/><circle cx="643.50" cy="296.50" r="1.45" fill="#0C66BA"/><circle cx="647.50" cy="184.50" r="1.45" fill="#0C66BA"/><circle cx="651.50" cy="186.50" r="1.45" fill="#0C66BA"/><circle cx="655.50" cy="191.50" r="1.45" fill="#0C66BA"/><circle cx="659.50" cy="199.50" r="1.45" fill="#0C66BA"/><circle cx="663.50" cy="212.50" r="1.45" fill="#0C66BA"/><circle cx="667.50" cy="214.50" r="1.45" fill="#0C66BA"/><circle cx="671.50" cy="217.50" r="1.45" fill="#0C66BA"/><circle cx="675.50" cy="214.50" r="1.45" fill="#0C66BA"/><circle cx="679.50" cy="212.50" r="1.45" fill="#0C66BA"/><circle cx="683.50" cy="191.50" r="1.45" fill="#0C66BA"/><circle cx="687.50" cy="186.50" r="1.45" fill="#0C66BA"/><circle cx="691.50" cy="191.50" r="1.45" fill="#0C66BA"/><circle cx="695.50" cy="307.50" r="1.45" fill="#0C66BA"/><circle cx="699.50" cy="302.50" r="1.45" fill="#0C66BA"/><circle cx="703.50" cy="307.50" r="1.45" fill="#0C66BA"/><circle cx="707.50" cy="304.50" r="1.45" fill="#0C66BA"/><circle cx="712.50" cy="296.50" r="1.45" fill="#0C66BA"/><circle cx="716.50" cy="181.50" r="1.45" fill="#0C66BA"/><circle cx="720.50" cy="189.50" r="1.45" fill="#0C66BA"/><circle cx="724.50" cy="191.50" r="1.45" fill="#0C66BA"/><circle cx="728.50" cy="199.50" r="1.45" fill="#0C66BA"/><circle cx="732.50" cy="207.50" r="1.45" fill="#0C66BA"/><circle cx="736.50" cy="217.50" r="1.45" fill="#0C66BA"/><circle cx="740.50" cy="207.50" r="1.45" fill="#0C66BA"/><circle cx="744.50" cy="204.50" r="1.45" fill="#0C66BA"/><circle cx="748.50" cy="201.50" r="1.45" fill="#0C66BA"/><circle cx="752.50" cy="201.50" r="1.45" fill="#0C66BA"/><circle cx="756.50" cy="207.50" r="1.45" fill="#0C66BA"/><circle cx="760.50" cy="214.50" r="1.45" fill="#0C66BA"/><circle cx="764.50" cy="222.50" r="1.45" fill="#0C66BA"/><circle cx="768.50" cy="230.50" r="1.45" fill="#0C66BA"/><circle cx="772.50" cy="235.50" r="1.45" fill="#0C66BA"/><circle cx="776.50" cy="222.50" r="1.45" fill="#0C66BA"/><circle cx="780.50" cy="222.50" r="1.45" fill="#0C66BA"/><circle cx="784.50" cy="214.50" r="1.45" fill="#0C66BA"/><circle cx="788.50" cy="214.50" r="1.45" fill="#0C66BA"/><circle cx="793.50" cy="199.50" r="1.45" fill="#0C66BA"/><circle cx="797.50" cy="191.50" r="1.45" fill="#0C66BA"/><circle cx="801.50" cy="186.50" r="1.45" fill="#0C66BA"/><circle cx="805.50" cy="181.50" r="1.45" fill="#0C66BA"/><circle cx="809.50" cy="168.50" r="1.45" fill="#0C66BA"/><circle cx="813.50" cy="168.50" r="1.45" fill="#0C66BA"/><circle cx="817.50" cy="171.50" r="1.45" fill="#0C66BA"/><circle cx="821.50" cy="168.50" r="1.45" fill="#0C66BA"/><circle cx="825.50" cy="166.50" r="1.45" fill="#0C66BA"/><circle cx="829.50" cy="163.50" r="1.45" fill="#0C66BA"/><circle cx="833.50" cy="160.50" r="1.45" fill="#0C66BA"/><circle cx="837.50" cy="160.50" r="1.45" fill="#0C66BA"/><circle cx="841.50" cy="160.50" r="1.45" fill="#0C66BA"/><circle cx="845.50" cy="160.50" r="1.45" fill="#0C66BA"/><circle cx="849.50" cy="160.50" r="1.45" fill="#0C66BA"/><circle cx="853.50" cy="160.50" r="1.45" fill="#0C66BA"/><circle cx="857.50" cy="158.50" r="1.45" fill="#0C66BA"/><circle cx="861.50" cy="158.50" r="1.45" fill="#0C66BA"/><circle cx="865.50" cy="158.50" r="1.45" fill="#0C66BA"/><circle cx="869.50" cy="158.50" r="1.45" fill="#0C66BA"/>
<polyline clip-path="url(#cb)" points="64.50,119.50 68.50,119.50 72.50,120.50 76.50,120.50 80.50,120.50 84.50,120.50 88.50,121.50 92.50,121.50 96.50,122.50 100.50,123.50 104.50,123.50 108.50,124.50 112.50,125.50 116.50,125.50 120.50,126.50 124.50,127.50 128.50,127.50 132.50,128.50 136.50,128.50 140.50,129.50 145.50,130.50 149.50,130.50 153.50,131.50 157.50,131.50 161.50,132.50 165.50,132.50 169.50,133.50 173.50,134.50 177.50,134.50 181.50,134.50 185.50,135.50 189.50,135.50 193.50,135.50 197.50,135.50 201.50,136.50 205.50,136.50 209.50,136.50 213.50,136.50 217.50,137.50 221.50,137.50 226.50,137.50 230.50,137.50 234.50,138.50 238.50,138.50 242.50,139.50 246.50,139.50 250.50,139.50 254.50,140.50 258.50,140.50 262.50,141.50 266.50,141.50 270.50,141.50 274.50,142.50 278.50,142.50 282.50,143.50 286.50,143.50 290.50,144.50 294.50,144.50 298.50,145.50 302.50,145.50 307.50,146.50 311.50,146.50 315.50,147.50 319.50,147.50 323.50,148.50 327.50,148.50 331.50,149.50 335.50,149.50 339.50,150.50 343.50,150.50 347.50,151.50 351.50,151.50 355.50,152.50 359.50,153.50 363.50,153.50 367.50,154.50 371.50,155.50 375.50,155.50 379.50,156.50 383.50,157.50 388.50,157.50 392.50,158.50 396.50,159.50 400.50,159.50 404.50,160.50 408.50,161.50 412.50,161.50 416.50,162.50 420.50,162.50 424.50,163.50 428.50,164.50 432.50,164.50 436.50,165.50 440.50,165.50 444.50,166.50 448.50,167.50 452.50,167.50 456.50,168.50 460.50,169.50 464.50,169.50 469.50,170.50 473.50,171.50 477.50,171.50 481.50,172.50 485.50,173.50 489.50,173.50 493.50,174.50 497.50,175.50 501.50,175.50 505.50,176.50 509.50,177.50 513.50,177.50 517.50,178.50 521.50,179.50 525.50,180.50 529.50,180.50 533.50,181.50 537.50,182.50 541.50,182.50 545.50,183.50 550.50,184.50 554.50,184.50 558.50,185.50 562.50,186.50 566.50,187.50 570.50,187.50 574.50,188.50 578.50,189.50 582.50,190.50 586.50,190.50 590.50,191.50 594.50,192.50 598.50,193.50 602.50,194.50 606.50,194.50 610.50,195.50 614.50,196.50 618.50,197.50 622.50,198.50 626.50,199.50 631.50,200.50 635.50,201.50 639.50,201.50 643.50,202.50 647.50,203.50 651.50,203.50 655.50,204.50 659.50,205.50 663.50,205.50 667.50,206.50 671.50,206.50 675.50,207.50 679.50,208.50 683.50,209.50 687.50,210.50 691.50,211.50 695.50,212.50 699.50,213.50 703.50,214.50 707.50,215.50 712.50,216.50 716.50,216.50 720.50,217.50 724.50,218.50 728.50,219.50 732.50,220.50 736.50,221.50 740.50,222.50 744.50,222.50 748.50,223.50 752.50,224.50 756.50,225.50 760.50,225.50 764.50,226.50 768.50,226.50 772.50,227.50 776.50,228.50 780.50,229.50 784.50,229.50 788.50,230.50 793.50,231.50 797.50,232.50 801.50,233.50 805.50,233.50 809.50,234.50 813.50,234.50 817.50,235.50 821.50,235.50 825.50,236.50 829.50,236.50 833.50,237.50 837.50,237.50 841.50,238.50 845.50,239.50 849.50,239.50 853.50,240.50 857.50,240.50 861.50,241.50 865.50,241.50 869.50,242.50" stroke="#EDB120" stroke-width="1"/>
<circle cx="64.50" cy="119.50" r="1.5" fill="#EDB120"/><circle cx="68.50" cy="119.50" r="1.5" fill="#EDB120"/><circle cx="72.50" cy="120.50" r="1.5" fill="#EDB120"/><circle cx="76.50" cy="120.50" r="1.5" fill="#EDB120"/><circle cx="80.50" cy="120.50" r="1.5" fill="#EDB120"/><circle cx="84.50" cy="120.50" r="1.5" fill="#EDB120"/><circle cx="88.50" cy="121.50" r="1.5" fill="#EDB120"/><circle cx="92.50" cy="121.50" r="1.5" fill="#EDB120"/><circle cx="96.50" cy="122.50" r="1.5" fill="#EDB120"/><circle cx="100.50" cy="123.50" r="1.5" fill="#EDB120"/><circle cx="104.50" cy="123.50" r="1.5" fill="#EDB120"/><circle cx="108.50" cy="124.50" r="1.5" fill="#EDB120"/><circle cx="112.50" cy="125.50" r="1.5" fill="#EDB120"/><circle cx="116.50" cy="125.50" r="1.5" fill="#EDB120"/><circle cx="120.50" cy="126.50" r="1.5" fill="#EDB120"/><circle cx="124.50" cy="127.50" r="1.5" fill="#EDB120"/><circle cx="128.50" cy="127.50" r="1.5" fill="#EDB120"/><circle cx="132.50" cy="128.50" r="1.5" fill="#EDB120"/><circle cx="136.50" cy="128.50" r="1.5" fill="#EDB120"/><circle cx="140.50" cy="129.50" r="1.5" fill="#EDB120"/><circle cx="145.50" cy="130.50" r="1.5" fill="#EDB120"/><circle cx="149.50" cy="130.50" r="1.5" fill="#EDB120"/><circle cx="153.50" cy="131.50" r="1.5" fill="#EDB120"/><circle cx="157.50" cy="131.50" r="1.5" fill="#EDB120"/><circle cx="161.50" cy="132.50" r="1.5" fill="#EDB120"/><circle cx="165.50" cy="132.50" r="1.5" fill="#EDB120"/><circle cx="169.50" cy="133.50" r="1.5" fill="#EDB120"/><circle cx="173.50" cy="134.50" r="1.5" fill="#EDB120"/><circle cx="177.50" cy="134.50" r="1.5" fill="#EDB120"/><circle cx="181.50" cy="134.50" r="1.5" fill="#EDB120"/><circle cx="185.50" cy="135.50" r="1.5" fill="#EDB120"/><circle cx="189.50" cy="135.50" r="1.5" fill="#EDB120"/><circle cx="193.50" cy="135.50" r="1.5" fill="#EDB120"/><circle cx="197.50" cy="135.50" r="1.5" fill="#EDB120"/><circle cx="201.50" cy="136.50" r="1.5" fill="#EDB120"/><circle cx="205.50" cy="136.50" r="1.5" fill="#EDB120"/><circle cx="209.50" cy="136.50" r="1.5" fill="#EDB120"/><circle cx="213.50" cy="136.50" r="1.5" fill="#EDB120"/><circle cx="217.50" cy="137.50" r="1.5" fill="#EDB120"/><circle cx="221.50" cy="137.50" r="1.5" fill="#EDB120"/><circle cx="226.50" cy="137.50" r="1.5" fill="#EDB120"/><circle cx="230.50" cy="137.50" r="1.5" fill="#EDB120"/><circle cx="234.50" cy="138.50" r="1.5" fill="#EDB120"/><circle cx="238.50" cy="138.50" r="1.5" fill="#EDB120"/><circle cx="242.50" cy="139.50" r="1.5" fill="#EDB120"/><circle cx="246.50" cy="139.50" r="1.5" fill="#EDB120"/><circle cx="250.50" cy="139.50" r="1.5" fill="#EDB120"/><circle cx="254.50" cy="140.50" r="1.5" fill="#EDB120"/><circle cx="258.50" cy="140.50" r="1.5" fill="#EDB120"/><circle cx="262.50" cy="141.50" r="1.5" fill="#EDB120"/><circle cx="266.50" cy="141.50" r="1.5" fill="#EDB120"/><circle cx="270.50" cy="141.50" r="1.5" fill="#EDB120"/><circle cx="274.50" cy="142.50" r="1.5" fill="#EDB120"/><circle cx="278.50" cy="142.50" r="1.5" fill="#EDB120"/><circle cx="282.50" cy="143.50" r="1.5" fill="#EDB120"/><circle cx="286.50" cy="143.50" r="1.5" fill="#EDB120"/><circle cx="290.50" cy="144.50" r="1.5" fill="#EDB120"/><circle cx="294.50" cy="144.50" r="1.5" fill="#EDB120"/><circle cx="298.50" cy="145.50" r="1.5" fill="#EDB120"/><circle cx="302.50" cy="145.50" r="1.5" fill="#EDB120"/><circle cx="307.50" cy="146.50" r="1.5" fill="#EDB120"/><circle cx="311.50" cy="146.50" r="1.5" fill="#EDB120"/><circle cx="315.50" cy="147.50" r="1.5" fill="#EDB120"/><circle cx="319.50" cy="147.50" r="1.5" fill="#EDB120"/><circle cx="323.50" cy="148.50" r="1.5" fill="#EDB120"/><circle cx="327.50" cy="148.50" r="1.5" fill="#EDB120"/><circle cx="331.50" cy="149.50" r="1.5" fill="#EDB120"/><circle cx="335.50" cy="149.50" r="1.5" fill="#EDB120"/><circle cx="339.50" cy="150.50" r="1.5" fill="#EDB120"/><circle cx="343.50" cy="150.50" r="1.5" fill="#EDB120"/><circle cx="347.50" cy="151.50" r="1.5" fill="#EDB120"/><circle cx="351.50" cy="151.50" r="1.5" fill="#EDB120"/><circle cx="355.50" cy="152.50" r="1.5" fill="#EDB120"/><circle cx="359.50" cy="153.50" r="1.5" fill="#EDB120"/><circle cx="363.50" cy="153.50" r="1.5" fill="#EDB120"/><circle cx="367.50" cy="154.50" r="1.5" fill="#EDB120"/><circle cx="371.50" cy="155.50" r="1.5" fill="#EDB120"/><circle cx="375.50" cy="155.50" r="1.5" fill="#EDB120"/><circle cx="379.50" cy="156.50" r="1.5" fill="#EDB120"/><circle cx="383.50" cy="157.50" r="1.5" fill="#EDB120"/><circle cx="388.50" cy="157.50" r="1.5" fill="#EDB120"/><circle cx="392.50" cy="158.50" r="1.5" fill="#EDB120"/><circle cx="396.50" cy="159.50" r="1.5" fill="#EDB120"/><circle cx="400.50" cy="159.50" r="1.5" fill="#EDB120"/><circle cx="404.50" cy="160.50" r="1.5" fill="#EDB120"/><circle cx="408.50" cy="161.50" r="1.5" fill="#EDB120"/><circle cx="412.50" cy="161.50" r="1.5" fill="#EDB120"/><circle cx="416.50" cy="162.50" r="1.5" fill="#EDB120"/><circle cx="420.50" cy="162.50" r="1.5" fill="#EDB120"/><circle cx="424.50" cy="163.50" r="1.5" fill="#EDB120"/><circle cx="428.50" cy="164.50" r="1.5" fill="#EDB120"/><circle cx="432.50" cy="164.50" r="1.5" fill="#EDB120"/><circle cx="436.50" cy="165.50" r="1.5" fill="#EDB120"/><circle cx="440.50" cy="165.50" r="1.5" fill="#EDB120"/><circle cx="444.50" cy="166.50" r="1.5" fill="#EDB120"/><circle cx="448.50" cy="167.50" r="1.5" fill="#EDB120"/><circle cx="452.50" cy="167.50" r="1.5" fill="#EDB120"/><circle cx="456.50" cy="168.50" r="1.5" fill="#EDB120"/><circle cx="460.50" cy="169.50" r="1.5" fill="#EDB120"/><circle cx="464.50" cy="169.50" r="1.5" fill="#EDB120"/><circle cx="469.50" cy="170.50" r="1.5" fill="#EDB120"/><circle cx="473.50" cy="171.50" r="1.5" fill="#EDB120"/><circle cx="477.50" cy="171.50" r="1.5" fill="#EDB120"/><circle cx="481.50" cy="172.50" r="1.5" fill="#EDB120"/><circle cx="485.50" cy="173.50" r="1.5" fill="#EDB120"/><circle cx="489.50" cy="173.50" r="1.5" fill="#EDB120"/><circle cx="493.50" cy="174.50" r="1.5" fill="#EDB120"/><circle cx="497.50" cy="175.50" r="1.5" fill="#EDB120"/><circle cx="501.50" cy="175.50" r="1.5" fill="#EDB120"/><circle cx="505.50" cy="176.50" r="1.5" fill="#EDB120"/><circle cx="509.50" cy="177.50" r="1.5" fill="#EDB120"/><circle cx="513.50" cy="177.50" r="1.5" fill="#EDB120"/><circle cx="517.50" cy="178.50" r="1.5" fill="#EDB120"/><circle cx="521.50" cy="179.50" r="1.5" fill="#EDB120"/><circle cx="525.50" cy="180.50" r="1.5" fill="#EDB120"/><circle cx="529.50" cy="180.50" r="1.5" fill="#EDB120"/><circle cx="533.50" cy="181.50" r="1.5" fill="#EDB120"/><circle cx="537.50" cy="182.50" r="1.5" fill="#EDB120"/><circle cx="541.50" cy="182.50" r="1.5" fill="#EDB120"/><circle cx="545.50" cy="183.50" r="1.5" fill="#EDB120"/><circle cx="550.50" cy="184.50" r="1.5" fill="#EDB120"/><circle cx="554.50" cy="184.50" r="1.5" fill="#EDB120"/><circle cx="558.50" cy="185.50" r="1.5" fill="#EDB120"/><circle cx="562.50" cy="186.50" r="1.5" fill="#EDB120"/><circle cx="566.50" cy="187.50" r="1.5" fill="#EDB120"/><circle cx="570.50" cy="187.50" r="1.5" fill="#EDB120"/><circle cx="574.50" cy="188.50" r="1.5" fill="#EDB120"/><circle cx="578.50" cy="189.50" r="1.5" fill="#EDB120"/><circle cx="582.50" cy="190.50" r="1.5" fill="#EDB120"/><circle cx="586.50" cy="190.50" r="1.5" fill="#EDB120"/><circle cx="590.50" cy="191.50" r="1.5" fill="#EDB120"/><circle cx="594.50" cy="192.50" r="1.5" fill="#EDB120"/><circle cx="598.50" cy="193.50" r="1.5" fill="#EDB120"/><circle cx="602.50" cy="194.50" r="1.5" fill="#EDB120"/><circle cx="606.50" cy="194.50" r="1.5" fill="#EDB120"/><circle cx="610.50" cy="195.50" r="1.5" fill="#EDB120"/><circle cx="614.50" cy="196.50" r="1.5" fill="#EDB120"/><circle cx="618.50" cy="197.50" r="1.5" fill="#EDB120"/><circle cx="622.50" cy="198.50" r="1.5" fill="#EDB120"/><circle cx="626.50" cy="199.50" r="1.5" fill="#EDB120"/><circle cx="631.50" cy="200.50" r="1.5" fill="#EDB120"/><circle cx="635.50" cy="201.50" r="1.5" fill="#EDB120"/><circle cx="639.50" cy="201.50" r="1.5" fill="#EDB120"/><circle cx="643.50" cy="202.50" r="1.5" fill="#EDB120"/><circle cx="647.50" cy="203.50" r="1.5" fill="#EDB120"/><circle cx="651.50" cy="203.50" r="1.5" fill="#EDB120"/><circle cx="655.50" cy="204.50" r="1.5" fill="#EDB120"/><circle cx="659.50" cy="205.50" r="1.5" fill="#EDB120"/><circle cx="663.50" cy="205.50" r="1.5" fill="#EDB120"/><circle cx="667.50" cy="206.50" r="1.5" fill="#EDB120"/><circle cx="671.50" cy="206.50" r="1.5" fill="#EDB120"/><circle cx="675.50" cy="207.50" r="1.5" fill="#EDB120"/><circle cx="679.50" cy="208.50" r="1.5" fill="#EDB120"/><circle cx="683.50" cy="209.50" r="1.5" fill="#EDB120"/><circle cx="687.50" cy="210.50" r="1.5" fill="#EDB120"/><circle cx="691.50" cy="211.50" r="1.5" fill="#EDB120"/><circle cx="695.50" cy="212.50" r="1.5" fill="#EDB120"/><circle cx="699.50" cy="213.50" r="1.5" fill="#EDB120"/><circle cx="703.50" cy="214.50" r="1.5" fill="#EDB120"/><circle cx="707.50" cy="215.50" r="1.5" fill="#EDB120"/><circle cx="712.50" cy="216.50" r="1.5" fill="#EDB120"/><circle cx="716.50" cy="216.50" r="1.5" fill="#EDB120"/><circle cx="720.50" cy="217.50" r="1.5" fill="#EDB120"/><circle cx="724.50" cy="218.50" r="1.5" fill="#EDB120"/><circle cx="728.50" cy="219.50" r="1.5" fill="#EDB120"/><circle cx="732.50" cy="220.50" r="1.5" fill="#EDB120"/><circle cx="736.50" cy="221.50" r="1.5" fill="#EDB120"/><circle cx="740.50" cy="222.50" r="1.5" fill="#EDB120"/><circle cx="744.50" cy="222.50" r="1.5" fill="#EDB120"/><circle cx="748.50" cy="223.50" r="1.5" fill="#EDB120"/><circle cx="752.50" cy="224.50" r="1.5" fill="#EDB120"/><circle cx="756.50" cy="225.50" r="1.5" fill="#EDB120"/><circle cx="760.50" cy="225.50" r="1.5" fill="#EDB120"/><circle cx="764.50" cy="226.50" r="1.5" fill="#EDB120"/><circle cx="768.50" cy="226.50" r="1.5" fill="#EDB120"/><circle cx="772.50" cy="227.50" r="1.5" fill="#EDB120"/><circle cx="776.50" cy="228.50" r="1.5" fill="#EDB120"/><circle cx="780.50" cy="229.50" r="1.5" fill="#EDB120"/><circle cx="784.50" cy="229.50" r="1.5" fill="#EDB120"/><circle cx="788.50" cy="230.50" r="1.5" fill="#EDB120"/><circle cx="793.50" cy="231.50" r="1.5" fill="#EDB120"/><circle cx="797.50" cy="232.50" r="1.5" fill="#EDB120"/><circle cx="801.50" cy="233.50" r="1.5" fill="#EDB120"/><circle cx="805.50" cy="233.50" r="1.5" fill="#EDB120"/><circle cx="809.50" cy="234.50" r="1.5" fill="#EDB120"/><circle cx="813.50" cy="234.50" r="1.5" fill="#EDB120"/><circle cx="817.50" cy="235.50" r="1.5" fill="#EDB120"/><circle cx="821.50" cy="235.50" r="1.5" fill="#EDB120"/><circle cx="825.50" cy="236.50" r="1.5" fill="#EDB120"/><circle cx="829.50" cy="236.50" r="1.5" fill="#EDB120"/><circle cx="833.50" cy="237.50" r="1.5" fill="#EDB120"/><circle cx="837.50" cy="237.50" r="1.5" fill="#EDB120"/><circle cx="841.50" cy="238.50" r="1.5" fill="#EDB120"/><circle cx="845.50" cy="239.50" r="1.5" fill="#EDB120"/><circle cx="849.50" cy="239.50" r="1.5" fill="#EDB120"/><circle cx="853.50" cy="240.50" r="1.5" fill="#EDB120"/><circle cx="857.50" cy="240.50" r="1.5" fill="#EDB120"/><circle cx="861.50" cy="241.50" r="1.5" fill="#EDB120"/><circle cx="865.50" cy="241.50" r="1.5" fill="#EDB120"/><circle cx="869.50" cy="242.50" r="1.5" fill="#EDB120"/>
</g>
<g stroke="#D4128E" stroke-width="1.3"><line x1="258.00" y1="761.50" x2="267.00" y2="761.50"/><line x1="259.32" y1="758.32" x2="265.68" y2="764.68"/><line x1="262.50" y1="757.00" x2="262.50" y2="766.00"/><line x1="265.68" y1="758.32" x2="259.32" y2="764.68"/></g>
<g stroke="#D4128E" stroke-width="1.3"><line x1="460.00" y1="761.50" x2="469.00" y2="761.50"/><line x1="461.32" y1="758.32" x2="467.68" y2="764.68"/><line x1="464.50" y1="757.00" x2="464.50" y2="766.00"/><line x1="467.68" y1="758.32" x2="461.32" y2="764.68"/></g>
<g stroke="#D4128E" stroke-width="1.3"><line x1="663.00" y1="196.50" x2="672.00" y2="196.50"/><line x1="664.32" y1="193.32" x2="670.68" y2="199.68"/><line x1="667.50" y1="192.00" x2="667.50" y2="201.00"/><line x1="670.68" y1="193.32" x2="664.32" y2="199.68"/></g>
<g stroke="#D4128E" stroke-width="1.3"><line x1="865.00" y1="158.50" x2="874.00" y2="158.50"/><line x1="866.32" y1="155.32" x2="872.68" y2="161.68"/><line x1="869.50" y1="154.00" x2="869.50" y2="163.00"/><line x1="872.68" y1="155.32" x2="866.32" y2="161.68"/></g>
<g fill="#262626" font-size="12px">
<text x="61.3" y="776" text-anchor="middle">0</text>
<text x="141.3" y="776" text-anchor="middle">20</text>
<text x="222.3" y="776" text-anchor="middle">40</text>
<text x="303.3" y="776" text-anchor="middle">60</text>
<text x="384.3" y="776" text-anchor="middle">80</text>
<text x="465.3" y="776" text-anchor="middle">100</text>
<text x="546.3" y="776" text-anchor="middle">120</text>
<text x="627.3" y="776" text-anchor="middle">140</text>
<text x="708.3" y="776" text-anchor="middle">160</text>
<text x="789.3" y="776" text-anchor="middle">180</text>
<text x="870.3" y="776" text-anchor="middle">200</text>
<text x="56" y="124.0" text-anchor="end">0</text>
<text x="56" y="188.0" text-anchor="end">-5</text>
<text x="56" y="252.0" text-anchor="end">-10</text>
<text x="56" y="316.0" text-anchor="end">-15</text>
<text x="56" y="380.0" text-anchor="end">-20</text>
<text x="56" y="445.0" text-anchor="end">-25</text>
<text x="56" y="509.0" text-anchor="end">-30</text>
<text x="56" y="573.0" text-anchor="end">-35</text>
<text x="56" y="637.0" text-anchor="end">-40</text>
<text x="56" y="701.0" text-anchor="end">-45</text>
<text x="56" y="765.0" text-anchor="end">-50</text>
</g>
<text x="467" y="113.5" text-anchor="middle" font-size="13.17px" font-weight="bold" fill="#262626">Episode reward for rlMDPEnv with rlDQNAgent</text>
<text x="467.3" y="791" text-anchor="middle" font-size="13.2px" fill="#262626">Episode Number</text>
<text transform="translate(32.4,441.7) rotate(-90)" text-anchor="middle" letter-spacing="0.11" font-size="13px" fill="#262626">Episode Reward</text>
</svg>

<!-- right panel -->
<div id="scroll" class="abs"></div>
<svg class="abs" style="left:1187px;top:87px" width="10" height="6" viewBox="0 0 10 6"><path d="M2 6 L5.5 2 L9 6 Z" fill="#8c8c8c"/></svg>
<svg class="abs" style="left:1187px;top:801px" width="10" height="6" viewBox="0 0 10 6"><path d="M2 1 L5.5 5 L9 1 Z" fill="#8c8c8c"/></svg>

<div class="abs" style="left:911px;top:97px;width:143px;height:15px;background:#fff"></div>
<div class="abs" style="left:911px;top:97px;width:5px;height:15px;background:#2b84d6"></div>
<div class="abs btn" style="left:1064px;top:92px;width:110px;height:25px;line-height:23px;color:#a3a3a3;font-size:12px">Training stopped</div>

<div class="abs lbl" style="left:911px;top:128px">Episode number:</div><div class="abs lbl" style="left:1033.6px;top:128px">200/5000</div>
<div class="abs lbl" style="left:911px;top:153px">Start time:</div><div class="abs lbl" style="left:1033.6px;top:153px">03-Apr-2025 18:32:23</div>
<div class="abs lbl" style="left:911px;top:178px">Duration:</div><div class="abs lbl" style="left:1033.6px;top:178px">00:14:32</div>
<div class="abs lbl" style="left:911px;top:203px">Final result:</div><div class="abs lbl" style="left:1033.6px;top:202px;line-height:15px;white-space:normal;width:140px">Training finished after all agents reached stop training criteria.</div>

<div class="abs panel" style="left:911px;top:258px;width:263px;height:295px"></div>
<div class="abs ptitle" style="left:912px;top:259px;width:261px;height:20px;line-height:18px">Training Information</div>
<div class="abs" style="left:922px;top:289px;width:241px;height:95px;background:#fff;border:1px solid #8a8a8a"></div>
<div class="abs" style="left:923px;top:290px;width:239px;height:27px;background:#f5f5f5;border-bottom:1px solid #8a8a8a"></div>
<div class="abs" style="left:923px;top:317px;width:239px;height:22px;background:#2b8cdc"></div>
<div class="abs" style="left:1042px;top:290px;width:1px;height:49px;background:#8a8a8a"></div>
<div class="abs lbl" style="left:926px;top:296.8px;font-weight:bold;font-size:12px">Agent</div>
<div class="abs lbl" style="left:1046px;top:296.8px;font-weight:bold;font-size:12px">Status</div>
<div class="abs lbl" style="left:926px;top:320px;color:#fff;font-size:12px;-webkit-text-stroke:0.3px #fff">rlDQNAgent</div>
<div class="abs lbl" style="left:1046px;top:320px;color:#fff;font-size:12px;-webkit-text-stroke:0.3px #fff">Training finished</div>

<div class="abs lbl" style="left:922px;top:395px;font-weight:bold;font-size:12px">Episode Information (rlDQNAgent):</div>
<div class="abs lbl" style="left:922px;top:420px">Episode reward:</div><div class="abs lbl" style="left:1035px;top:420px">-3</div>
<div class="abs lbl" style="left:922px;top:445px">Average reward:</div><div class="abs lbl" style="left:1035px;top:445px">-3</div>
<div class="abs lbl" style="left:922px;top:470px">Episode Q0:</div><div class="abs lbl" style="left:1035px;top:470px">-9.5348</div>
<div class="abs lbl" style="left:922px;top:495px">Evaluation statis…</div><div class="abs lbl" style="left:1035px;top:495px">-3</div>
<div class="abs btn" style="left:1053px;top:519px;width:110px;height:23px;line-height:21px;color:#1a1a1a;border-color:#8a8a8a;font-size:12px">More Details...</div>

<div class="abs panel" style="left:911px;top:563px;width:263px;height:118px"></div>
<div class="abs ptitle" style="left:912px;top:564px;width:261px;height:20px;line-height:18px">Plot Options</div>
<div class="abs cb" style="left:922px;top:595px"></div><div class="abs lbl" style="left:939px;top:595px">Show EpisodeQ0</div>
<div class="abs cb" style="left:922px;top:622px"></div><div class="abs lbl" style="left:939px;top:622px">Show evaluation statistic</div>
<div class="abs cb" style="left:922px;top:652px"></div><div class="abs lbl" style="left:939px;top:651.3px">Show last N episodes</div>
<svg class="abs" style="left:922px;top:595px" width="14" height="14" viewBox="0 0 14 14"><path d="M2.6 6.6 L5.9 9.9 L11.6 3" fill="none" stroke="#111" stroke-width="1.9"/></svg>
<svg class="abs" style="left:922px;top:622px" width="14" height="14" viewBox="0 0 14 14"><path d="M2.6 6.6 L5.9 9.9 L11.6 3" fill="none" stroke="#111" stroke-width="1.9"/></svg>
<div class="abs" style="left:1066px;top:647px;width:97px;height:23px;border:1px solid #d0d0d0;background:#f5f5f5;color:#a3a3a3;text-align:right;padding-right:4px;line-height:23px;font-size:12px">5000</div>

<div class="abs panel" style="left:911px;top:691px;width:263px;height:102px"></div>
<div class="abs" style="left:917px;top:697px;width:251px;height:90px;background:#fff"></div>
<div class="abs" style="left:911px;top:691px;width:263px;height:103px"><svg width="263" height="103" viewBox="0 0 263 103" style="position:absolute;left:0;top:0"><line x1="53.5" y1="13.5" x2="94" y2="13.5" stroke="#38B8EC" stroke-width="1"/><circle cx="73.5" cy="13.5" r="1.6" fill="#38B8EC"/><line x1="53.5" y1="32.5" x2="94" y2="32.5" stroke="#0C66BA" stroke-width="1.1"/><circle cx="73.5" cy="32.5" r="1.6" fill="#0C66BA"/><line x1="53.5" y1="51.5" x2="94" y2="51.5" stroke="#EDB120" stroke-width="1"/><circle cx="73.5" cy="51.5" r="1.6" fill="#EDB120"/><g stroke="#D4128E" stroke-width="0.8"><line x1="68.80" y1="79.00" x2="78.20" y2="79.00"/><line x1="70.18" y1="75.68" x2="76.82" y2="82.32"/><line x1="73.50" y1="74.30" x2="73.50" y2="83.70"/><line x1="76.82" y1="75.68" x2="70.18" y2="82.32"/></g></svg>
<div class="abs lbl" style="left:97px;top:7px;font-size:10.82px">Episode reward</div>
<div class="abs lbl" style="left:97px;top:26px;font-size:10.82px">Average reward</div>
<div class="abs lbl" style="left:97px;top:45px;font-size:10.82px">Episode Q0</div>
<div class="abs lbl" style="left:97px;top:67.5px;font-size:10.82px;line-height:12.5px">Evaluation statistic<br>(MeanEpisodeReward)</div>
</div>

<div id="status" class="abs"></div>
<div class="abs" style="left:1px;top:814px;width:899px;height:1px;background:#808080"></div>
<div class="abs" style="left:900px;top:815px;width:1px;height:23px;background:#c0c0c0"></div>
<svg class="abs" style="left:1185px;top:819px" width="12" height="14" viewBox="0 0 12 14"><path d="M1 1.5 L7.6 7 L1 12.5 Z" fill="#8e8e8e"/><rect x="7.8" y="1" width="1.9" height="12" fill="#8e8e8e"/></svg>
<!-- window border -->
<div class="abs win" style="left:0;top:0;width:1202px;height:838px;border:1px solid #a8a8a8"></div>
<div class="abs" style="left:0;top:143px;width:1px;height:1px;background:#333"></div>
<div class="abs" style="left:0;top:146px;width:1px;height:2px;background:#8a6a4a"></div>
<div class="abs" style="left:0;top:150px;width:1px;height:1px;background:#333"></div>
<div class="abs" style="left:0;top:226px;width:1px;height:9px;background:#2e75b6"></div>
<div class="abs" style="left:0;top:297px;width:1px;height:9px;background:#2e5fa0"></div>
<div class="abs" style="left:0;top:473px;width:1px;height:9px;background:#2e5fa0"></div>
</body></html>
